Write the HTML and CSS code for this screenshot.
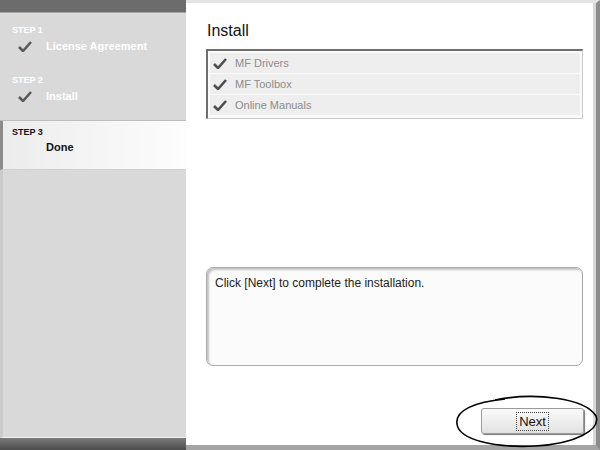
FILE: index.html
```html
<!DOCTYPE html>
<html lang="en">
<head>
    <meta charset="UTF-8">
    <title>Install</title>
    <link rel="stylesheet" href="styles.css">
</head>
<body>
    <div class="window">
        <!-- Steps sidebar -->
        <div class="sidebar">
            <div class="bar-top"></div>
            <div class="steps-done">
                <div class="step">
                    <div class="step-label">STEP 1</div>
                    <div class="step-name">
                        <svg class="check" viewBox="0 0 14 11"><path d="M1 6 L5 10 L13 1" /></svg>
                        License Agreement
                    </div>
                </div>
                <div class="step">
                    <div class="step-label">STEP 2</div>
                    <div class="step-name">
                        <svg class="check" viewBox="0 0 14 11"><path d="M1 6 L5 10 L13 1" /></svg>
                        Install
                    </div>
                </div>
            </div>
            <div class="step-current">
                <div class="step-label">STEP 3</div>
                <div class="step-name"><span class="no-check"></span>Done</div>
            </div>
            <div class="filler"></div>
            <div class="bar-bottom"></div>
        </div>

        <!-- Main panel -->
        <div class="main">
            <h1>Install</h1>
            <div class="list">
                <div class="row"><svg class="check" viewBox="0 0 14 11"><path d="M1 6 L5 10 L13 1" /></svg>MF Drivers</div>
                <div class="row"><svg class="check" viewBox="0 0 14 11"><path d="M1 6 L5 10 L13 1" /></svg>MF Toolbox</div>
                <div class="row"><svg class="check" viewBox="0 0 14 11"><path d="M1 6 L5 10 L13 1" /></svg>Online Manuals</div>
            </div>
            <div class="spacer"></div>
            <div class="message">Click [Next] to complete the installation.</div>
            <div class="actions">
                <button class="next"><span>Next</span></button>
                <svg class="circle" viewBox="0 0 144 54"><path d="M40 6 C80 -2 130 4 141 22 C146 36 120 50 80 52 C40 54 4 46 2 30 C0 16 20 8 50 5" /></svg>
            </div>
        </div>
    </div>
</body>
</html>
```

FILE: styles.css
```css
body {
    margin: 0;
    font-family: "Liberation Sans", Arial, sans-serif;
    background: #fff;
}
.window {
    display: flex;
    width: 600px;
    height: 450px;
    overflow: hidden;
}
.sidebar {
    width: 186px;
    display: flex;
    flex-direction: column;
    background: #d9d9d9;
}
.bar-top {
    height: 12px;
    background: #6c6c6c;
    border-bottom: 1px solid #a8a8a8;
}
.steps-done {
    height: 108px;
    padding-top: 12px;
    box-sizing: border-box;
    border-bottom: 1px solid #bdbdbd;
    color: #fff;
}
.step {
    margin-bottom: 19px;
}
.step-label {
    font-size: 9px;
    font-weight: bold;
    padding-left: 12px;
    line-height: 11px;
}
.step-name {
    display: flex;
    align-items: center;
    font-size: 11px;
    font-weight: bold;
    padding-left: 18px;
    height: 20px;
}
.check {
    width: 14px;
    height: 11px;
    margin-right: 14px;
    flex-shrink: 0;
}
.check path {
    fill: none;
    stroke: #5a5a5a;
    stroke-width: 2.6;
}
.no-check {
    width: 28px;
}
.step-current {
    height: 49px;
    box-sizing: border-box;
    padding-top: 6px;
    border-left: 3px solid #8a8a8a;
    border-bottom: 1px solid #cfcfcf;
    background: linear-gradient(to right, #ececec, #fdfdfd);
    color: #111;
}
.step-current .step-label {
    padding-left: 9px;
}
.step-current .step-name {
    padding-left: 15px;
    height: 18px;
}
.filler {
    flex: 1;
    border-left: 3px solid #cbcbcb;
    border-bottom: 1px solid #f2f2f2;
}
.bar-bottom {
    height: 12px;
    background: linear-gradient(#7a7a7a, #4c4c4c);
}
.main {
    flex: 1;
    display: flex;
    flex-direction: column;
    padding: 20px 10px 11px 20px;
    border-top: 3px solid #e4e4e4;
    border-right: 4px solid #8c8c8c;
    border-bottom: 5px solid #a4a4a4;
    box-shadow: inset -3px 0 0 #d8d8d8;
    position: relative;
}
h1 {
    margin: 0 0 10px 1px;
    font-size: 16px;
    font-weight: normal;
    color: #111;
    line-height: 16px;
}
.list {
    width: 377px;
    box-sizing: border-box;
    border: 1px solid #c9c9c9;
    border-top: 2px solid #6e6e6e;
    border-left: 2px solid #6e6e6e;
    padding: 2px 2px 2px 2px;
    background: #fafafa;
}
.row {
    display: flex;
    align-items: center;
    height: 20px;
    padding-left: 3px;
    margin-bottom: 1px;
    background: #eeeeee;
    font-size: 11px;
    color: #8c8c8c;
}
.row .check {
    margin-right: 8px;
}
.row .check path {
    stroke: #4e4e4e;
}
.spacer {
    flex: 1;
}
.message {
    width: 377px;
    height: 99px;
    box-sizing: border-box;
    border: 1px solid #a9a9a9;
    border-radius: 7px;
    box-shadow: inset 2px 2px 2px #c4c4c4;
    background: #fbfbfb;
    padding: 8px 8px;
    font-size: 12px;
    color: #222;
    margin-bottom: 42px;
}
.actions {
    display: flex;
    justify-content: flex-end;
    padding-right: 2px;
    position: relative;
}
.next {
    width: 103px;
    height: 26px;
    border: 1px solid #9a9a9a;
    border-radius: 3px;
    background: linear-gradient(#fafafa, #e2e2e2);
    box-shadow: 1px 1px 1px #777;
    font-family: "Liberation Sans", Arial, sans-serif;
    font-size: 13px;
    color: #111;
    padding: 0;
}
.next span {
    border: 1px dotted #444;
    padding: 1px 2px;
}
.circle {
    position: absolute;
    right: -13px;
    top: -14px;
    width: 144px;
    height: 54px;
}
.circle path {
    fill: none;
    stroke: #000;
    stroke-width: 1.6;
}
```
